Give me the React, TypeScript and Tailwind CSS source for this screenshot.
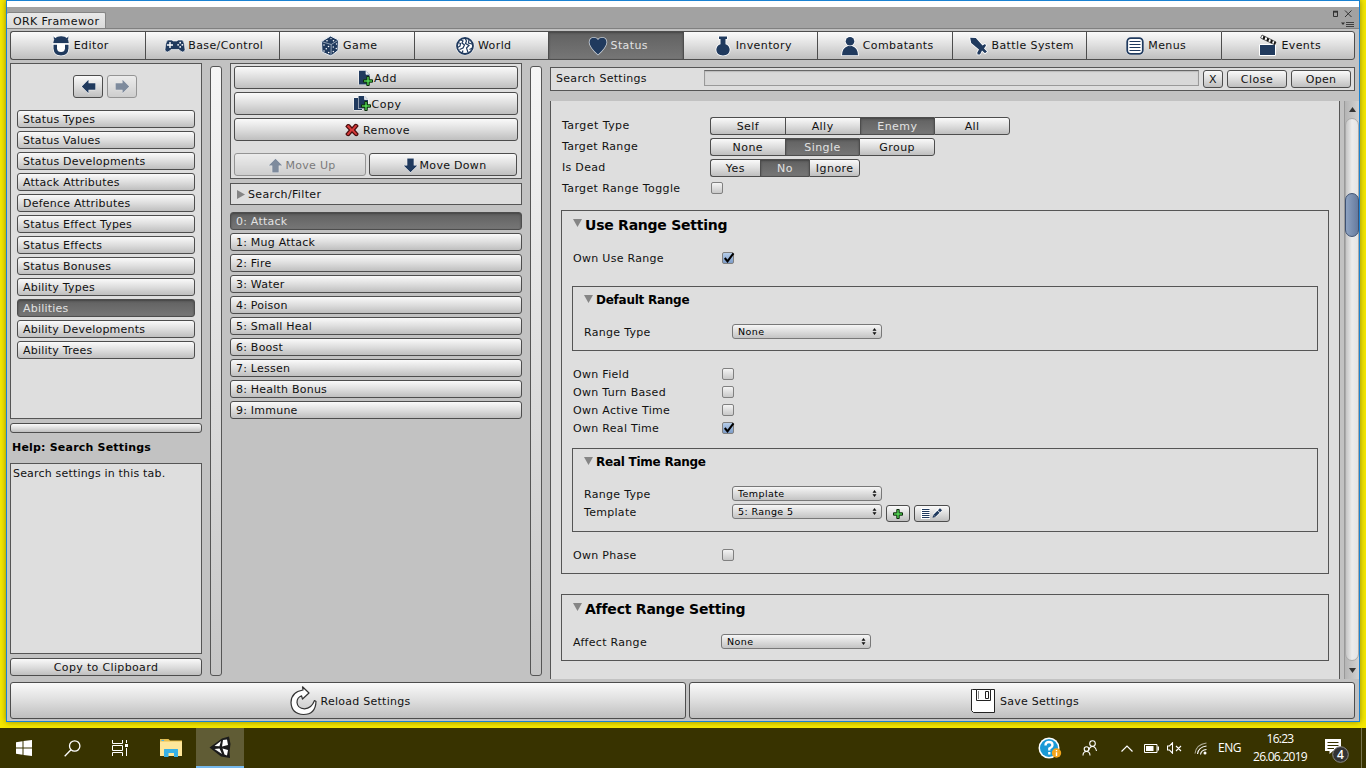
import type { ReactNode } from 'react';
import clsx from 'clsx';

const NAVY = '#203a5e';

const STATUS_SECTIONS = [
    'Status Types',
    'Status Values',
    'Status Developments',
    'Attack Attributes',
    'Defence Attributes',
    'Status Effect Types',
    'Status Effects',
    'Status Bonuses',
    'Ability Types',
    'Abilities',
    'Ability Developments',
    'Ability Trees',
];

const ABILITIES = [
    'Attack',
    'Mug Attack',
    'Fire',
    'Water',
    'Poison',
    'Small Heal',
    'Boost',
    'Lessen',
    'Health Bonus',
    'Immune',
];

const RAISED =
    'border border-[#4d4d4d] bg-linear-to-b from-[#fafafa] via-[#dedede] to-[#bfbfbf]';
const PRESSED =
    'border border-[#4d4d4d] bg-linear-to-b from-[#616161] to-[#767676] text-[#e2e2e2] shadow-[inset_0_1px_2px_#444]';

/* ---------- icons ---------- */

function Halo({
    size = 22,
    children,
}: {
    size?: number;
    children: ReactNode;
}) {
    return (
        <svg
            width={size}
            height={size}
            viewBox="0 0 22 22"
            fill={NAVY}
            stroke="#fff"
            strokeWidth="1.6"
            strokeLinejoin="round"
            paintOrder="stroke"
            className="shrink-0"
        >
            {children}
        </svg>
    );
}

function EditorIcon() {
    return (
        <svg width="22" height="22" viewBox="0 0 22 22" className="shrink-0">
            <path
                d="M3.500 9.500H18.500V13.500Q18 20.500 11 20.500T3.500 13.500Z"
                fill={NAVY}
                stroke="#fff"
                strokeWidth="1.400"
                paintOrder="stroke"
            />
            <path d="M7 9H15V13.500Q14.600 17 11 17T7 13.500Z" fill="#fff" />
            <path d="M3.500 1 6 3.500M18.500 1 16 3.500" stroke="#fff" strokeWidth="2.500" />
            <path d="M3.500 1.200 4 4.500 6 4ZM18.500 1.200 18 4.500 16 4Z" fill={NAVY} />
            <path d="M3.200 8.300Q3.500 1.500 11 1.300T18.800 8.300Z" fill={NAVY} />
            <path d="M2.500 8.900H19.500" stroke="#fff" strokeWidth="1.200" />
        </svg>
    );
}

function GamepadIcon() {
    return (
        <svg width="22" height="22" viewBox="0 0 22 22" className="shrink-0">
            <path
                d="M3.500 5H8L9 6H13L14 5H18.500Q20.500 7 21 14.500 21 17 18.500 17 16.500 16.500 15 14.500H7Q5.500 16.500 3.500 17 1 17 1 14.500 1.500 7 3.500 5Z"
                fill={NAVY}
                stroke="#fff"
                strokeWidth=".6"
            />
            <path d="M5.300 7H6.700V9.300H9V10.700H6.700V13H5.300V10.700H3V9.300H5.300Z" fill="#fff" />
            <g fill="#fff">
                <circle cx="16.200" cy="7.700" r=".9" />
                <circle cx="18.300" cy="9.800" r=".9" />
                <circle cx="14.100" cy="9.800" r=".9" />
                <circle cx="16.200" cy="11.900" r=".9" />
            </g>
        </svg>
    );
}

function DiceIcon() {
    return (
        <svg width="22" height="22" viewBox="0 0 22 22" className="shrink-0">
            <path
                d="M11.500 1 19.500 5 19 15.500 12 21 3 17 2.500 6.500Z"
                fill={NAVY}
                stroke="#e8edf3"
                strokeWidth="1"
            />
            <path
                d="M2.500 6.500 12.200 9.500 19.500 5M12.200 9.500 12 21"
                fill="none"
                stroke="#c3cfdb"
                strokeWidth=".7"
            />
            <g fill="#fff">
                <circle cx="8" cy="5.700" r=".8" />
                <circle cx="12" cy="3.600" r=".7" />
                <circle cx="14.500" cy="5.700" r=".8" />
                <circle cx="5" cy="10" r=".8" />
                <circle cx="9.500" cy="11.500" r=".8" />
                <circle cx="7.300" cy="13.800" r=".8" />
                <circle cx="5" cy="16" r=".8" />
                <circle cx="9.700" cy="17.500" r=".8" />
                <circle cx="14.300" cy="12" r=".7" />
                <circle cx="17.500" cy="9" r=".7" />
                <circle cx="14.300" cy="16.500" r=".7" />
                <circle cx="17.300" cy="13.500" r=".7" />
            </g>
        </svg>
    );
}

function GlobeIcon() {
    return (
        <svg width="22" height="22" viewBox="0 0 22 22" fill="none" className="shrink-0">
            <circle cx="11" cy="11" r="9.300" fill="#fff" />
            <circle cx="11" cy="11" r="8" stroke={NAVY} strokeWidth="1.800" />
            <path
                d="M4 7.500 6.500 8.500 6 11 3.500 12.500M6 4.500 9 6 8 8 10.500 10 9 13 5.500 14.500M11 3 12.500 6 11.500 8.500 15 10.500 12.500 13 14 17.500M15 4.500 14.500 8 18 9M18.500 13 15.500 14.500M8 18 9 15.500"
                stroke={NAVY}
                strokeWidth="1.200"
            />
        </svg>
    );
}

function HeartIcon() {
    return (
        <Halo>
            <path d="M11 19.500Q3 12.500 2.500 7.500 2.600 3 6.800 2.800 9.800 2.900 11 5 12.200 2.900 15.200 2.800 19.400 3 19.500 7.500 19 12.500 11 19.500Z" stroke="#ccd2d9" />
        </Halo>
    );
}

function FlaskIcon() {
    return (
        <Halo>
            <path d="M7 1.500H15V4H13.500V9.200Q17.500 10.500 17.700 14.800 17.500 20.300 11 20.500 4.500 20.300 4.300 14.800 4.500 10.500 8.500 9.200V4H7Z" />
        </Halo>
    );
}

function PersonIcon() {
    return (
        <Halo>
            <path d="M3 20.300Q3.300 12.800 8.500 11.300L11 10.500 13.500 11.300Q18.700 12.800 19 20.300Z" />
            <circle cx="11" cy="6.200" r="4.300" />
        </Halo>
    );
}

function SwordIcon() {
    return (
        <Halo>
            <path d="M2.200 2.800 7.800 3 14.500 10.500 17 9 18 10.500 16 13.500 19 16.500 17 18.300 14 15.500 12 19.500 9.500 19.500 9.300 17.500 11 14.500 3.200 8Z" />
        </Halo>
    );
}

function MenusIcon() {
    return (
        <svg width="22" height="22" viewBox="0 0 22 22" fill="none" className="shrink-0">
            <rect x="2" y="2" width="18" height="18" rx="4.500" fill="#fff" />
            <rect x="3.200" y="3.200" width="15.600" height="15.600" rx="3.500" stroke={NAVY} strokeWidth="1.800" />
            <path d="M5.500 6.500H16.500M5.500 9.500H16.500M5.500 12.500H16.500M5.500 15.500H16.500" stroke={NAVY} />
        </svg>
    );
}

function ClapperIcon() {
    return (
        <svg width="22" height="22" viewBox="0 0 22 22" className="shrink-0 overflow-visible">
            <path d="M2.500 9.500H18.500V20.500H2.500Z" fill={NAVY} stroke="#fff" />
            <path d="M5 0 19 7 17.800 9.800 3.600 3Z" fill="#fff" stroke="#222" strokeWidth=".7" />
            <path d="M6.500.8 8.500 1.800 7.500 4.800 5.500 3.900ZM10.300 2.700 12.300 3.700 11.300 6.700 9.300 5.800ZM14 4.600 16 5.600 15 8.500 13 7.600ZM17.500 6.200 19 7 17.800 9.800 16.500 9.200Z" fill="#111" />
        </svg>
    );
}

function ArrowIcon({ className }: { className?: string }) {
    return (
        <svg width="15" height="15" viewBox="0 0 15 15" className={clsx('shrink-0', className)}>
            <path
                d="M.8 7.500 7.500.7V4.300H14.400V10.700H7.500V14.300Z"
                fill={NAVY}
                stroke="#fff"
                strokeWidth="1"
                paintOrder="stroke"
            />
        </svg>
    );
}

function PlusMark() {
    return (
        <path
            d="M8.800 6.500H11.200V9.800H14.500V12.200H11.200V15.500H8.800V12.200H5.500V9.800H8.800Z"
            fill="#4fd04f"
            stroke="#0b2a0b"
            strokeWidth="1"
        />
    );
}

function AddIcon() {
    return (
        <svg width="16" height="17" viewBox="0 0 16 17" className="shrink-0">
            <path d="M1 .8H8L11.500 4.300V14.500H1Z" fill={NAVY} stroke="#fff" paintOrder="stroke" />
            <path d="M8 .8V4.300H11.500" fill="#dfe5ec" stroke="#fff" strokeWidth=".7" />
            <PlusMark />
        </svg>
    );
}

function CopyIcon() {
    return (
        <svg width="19" height="18" viewBox="-3 0 19 18" className="shrink-0">
            <path d="M-2 3H6V15H-2Z" fill={NAVY} stroke="#fff" paintOrder="stroke" />
            <path d="M2.500 1H8.500L12 4.500V13.500H2.500Z" fill={NAVY} stroke="#fff" paintOrder="stroke" />
            <path d="M8.500 1V4.500H12" fill="#dfe5ec" stroke="#fff" strokeWidth=".7" />
            <PlusMark />
        </svg>
    );
}

function RemoveIcon() {
    return (
        <svg width="14" height="14" viewBox="0 0 14 14" className="shrink-0">
            <path
                d="M1 3.500Q3 .5 4.500 2L7 5 10 1.500Q12 1 13 3L9.500 7 13 11Q12.500 13 10.500 12.500L7 9 4 12.500Q2 13 1 11L4.500 7Z"
                fill="#d93a3a"
                stroke="#4b0d0d"
                strokeWidth="1.200"
            />
        </svg>
    );
}

function ReloadIcon() {
    return (
        <svg width="27" height="30" viewBox="0 0 27 30" className="shrink-0">
            <path
                d="M12.500.8 19 7 12.500 13 11.500 9.800Q7 11.500 7 16.500 7.500 22.500 14.500 22.800 21.500 22.500 24.500 14.500L26 15.500Q25.500 28.500 13.500 28.500 1.500 28 1 16.500 1.200 6 13 4Z"
                fill="#fff"
                stroke="#333"
                strokeWidth="1.200"
                strokeLinejoin="round"
            />
        </svg>
    );
}

function DiskIcon() {
    return (
        <svg width="24" height="24" viewBox="0 0 24 24" fill="#fff" stroke="#222" className="shrink-0">
            <path d="M1.500.5H23.500V23.500H2.500L.5 21.500V.5Z" />
            <path d="M5.500.5H19.500V11.500H5.500Z" />
            <path d="M14.500 2.500H17.500V9.500H14.500Z" />
            <path d="M7.500 2V10" stroke="#888" />
        </svg>
    );
}

const TABS: { label: string; icon: ReactNode }[] = [
    { label: 'Editor', icon: <EditorIcon /> },
    { label: 'Base/Control', icon: <GamepadIcon /> },
    { label: 'Game', icon: <DiceIcon /> },
    { label: 'World', icon: <GlobeIcon /> },
    { label: 'Status', icon: <HeartIcon /> },
    { label: 'Inventory', icon: <FlaskIcon /> },
    { label: 'Combatants', icon: <PersonIcon /> },
    { label: 'Battle System', icon: <SwordIcon /> },
    { label: 'Menus', icon: <MenusIcon /> },
    { label: 'Events', icon: <ClapperIcon /> },
];

/* ---------- controls ---------- */

function Button({
    className,
    disabled,
    children,
}: {
    className?: string;
    disabled?: boolean;
    children?: ReactNode;
}) {
    return (
        <button
            className={clsx(
                'flex shrink-0 items-center justify-center rounded-[3px]',
                RAISED,
                disabled && 'opacity-50',
                className,
            )}
        >
            {children}
        </button>
    );
}

function ListButton({ label, active }: { label: string; active?: boolean }) {
    return (
        <button
            className={clsx(
                'flex h-[18px] w-full shrink-0 items-center rounded-[3px] pl-[5px] tracking-[0.22px]',
                active ? PRESSED : RAISED,
            )}
        >
            {label}
        </button>
    );
}

function Segmented({
    options,
    value,
    className,
}: {
    options: string[];
    value: string;
    className: string;
}) {
    return (
        <div className={clsx('flex h-[18px] tracking-[0.45px]', className)}>
            {options.map((option) => (
                <button
                    key={option}
                    className={clsx(
                        'flex flex-1 items-center justify-center border-r-0 first:rounded-l-[3px] last:rounded-r-[3px] last:border-r',
                        option === value ? PRESSED : RAISED,
                    )}
                >
                    {option}
                </button>
            ))}
        </div>
    );
}

function Checkbox({ checked }: { checked?: boolean }) {
    return (
        <span
            className={clsx(
                'mt-0.5 block size-3 rounded-[2px] border border-[#808080] bg-linear-to-b',
                checked ? 'from-[#b5cdea] to-[#7d9cc8]' : 'from-[#f4f4f4] to-[#c8c8c8]',
            )}
        >
            {checked && (
                <svg width="12" height="12" viewBox="0 0 12 12" className="-mt-px block overflow-visible">
                    <path d="M1.800 6 4.500 9.300 10.500 1.300" fill="none" stroke="#000" strokeWidth="2.100" />
                </svg>
            )}
        </span>
    );
}

function Select({ value }: { value: string }) {
    return (
        <div className="flex h-[15px] w-[150px] items-center justify-between rounded-[3px] border border-[#787878] bg-linear-to-b from-[#f6f6f6] to-[#c4c4c4] pr-1 pl-[5px] text-[9.500px] tracking-[0.4px] text-black">
            {value}
            <svg width="5" height="7" viewBox="0 0 5 7">
                <path d="M2.500 0 4.500 2.700H.5ZM2.500 7 .5 4.300H4.500Z" fill="#111" />
            </svg>
        </div>
    );
}

function Row({
    label,
    className,
    labelClass,
    children,
}: {
    label: string;
    className?: string;
    labelClass: string;
    children: ReactNode;
}) {
    return (
        <div className={clsx('flex shrink-0 items-start', className)}>
            <span className={clsx('h-4 shrink-0 leading-[18px]', labelClass)}>{label}</span>
            {children}
        </div>
    );
}

function Foldout({ className, children }: { className?: string; children: ReactNode }) {
    return (
        <div className={clsx('flex items-start font-bold text-black', className)}>
            <svg width="9" height="8" viewBox="0 0 9 8" className="mt-[3px] mr-[3px] shrink-0">
                <path d="M0 0H9L4.500 8Z" fill="#858585" />
            </svg>
            {children}
        </div>
    );
}

/* ---------- panels ---------- */

function WindowHeader() {
    return (
        <div className="flex h-[22px] shrink-0 items-end justify-between border-b border-[#808080] bg-[#a2a2a2]">
            <div className="flex h-4 w-[99px] items-center rounded-t-[2px] border-t border-r border-[#858585] bg-linear-to-b from-[#e9e9e9] to-[#dadada] pt-px pl-1.5">
                <span className="text-[11px] tracking-[0.4px]">ORK Framewor</span>
            </div>
            <svg width="24" height="20" viewBox="0 0 24 20" fill="none" stroke="#333" className="mr-1 block">
                <path d="M2 4H7M2.500 4V8.500H6.500V4" />
                <path d="M2 3.500H7" strokeWidth="1.500" />
                <path d="M14 2.500 20.500 9M20.500 2.500 14 9" />
                <path d="M15 14.500H23M15 16.500H23M15 18.500H23" strokeWidth=".9" />
                <path d="M10 14.500H14L12 17Z" fill="#333" stroke="none" />
            </svg>
        </div>
    );
}

function SectionColumn() {
    return (
        <div className="mt-[3px] flex w-48 shrink-0 flex-col">
            <div className="h-[356px] border border-[#555] bg-[#dedede] px-1.5 pt-[11px]">
                <div className="flex justify-center gap-1 pr-0.5">
                    <Button className="h-[23px] w-[30px]">
                        <ArrowIcon />
                    </Button>
                    <Button className="h-[23px] w-[30px]" disabled>
                        <ArrowIcon className="rotate-180" />
                    </Button>
                </div>
                <div className="mt-3 flex flex-col gap-[3px]">
                    {STATUS_SECTIONS.map((section) => (
                        <ListButton key={section} label={section} active={section === 'Abilities'} />
                    ))}
                </div>
            </div>
            <Button className="mt-1 h-2.5" />
            <p className="mt-[7px] ml-0.5 text-[11px] leading-4 font-bold tracking-[0.2px] text-black">
                Help: Search Settings
            </p>
            <div className="mt-[7px] h-[191px] border border-[#555] bg-[#dedede] pt-0.5 pl-0.5 leading-4 tracking-[0.18px]">
                Search settings in this tab.
            </div>
            <Button className="mt-1 h-[18px] tracking-[0.35px]">Copy to Clipboard</Button>
        </div>
    );
}

function Splitter() {
    return (
        <div className="mx-2 mt-1.5 h-[610px] w-3 shrink-0 rounded-[3px] border border-[#555] bg-linear-to-b from-[#f6f6f6] to-[#c6c6c6]" />
    );
}

function AbilityColumn() {
    return (
        <div className="mt-[3px] flex w-[292px] shrink-0 flex-col">
            <div className="flex h-[116px] flex-col gap-[3px] border border-[#555] bg-[#dedede] px-[3px] pt-0.5">
                <Button className="h-[23px] pt-px pl-[3px] tracking-[0.5px]">
                    <AddIcon />
                    Add
                </Button>
                <Button className="h-[23px] pt-px pl-0.5 tracking-[0.5px]">
                    <CopyIcon />
                    Copy
                </Button>
                <Button className="h-[23px] gap-1 pt-px pl-[3px] tracking-[0.4px]">
                    <RemoveIcon />
                    Remove
                </Button>
                <div className="mt-[9px] flex gap-[3px]">
                    <Button className="h-[23px] w-[132px] gap-0.5 pt-px pl-1" disabled>
                        <ArrowIcon className="rotate-90" />
                        Move Up
                    </Button>
                    <Button className="h-[23px] w-[148px] gap-0.5 pt-px pl-[3px]">
                        <ArrowIcon className="-rotate-90" />
                        Move Down
                    </Button>
                </div>
            </div>
            <div className="mt-1 flex h-[22px] items-center gap-[3px] border border-[#555] bg-[#dedede] pl-1.5 tracking-[0.35px]">
                <svg width="8" height="9" viewBox="0 0 8 9">
                    <path d="M0 0 8 4.500 0 9Z" fill="#858585" />
                </svg>
                Search/Filter
            </div>
            <div className="mt-[7px] flex flex-col gap-[3px]">
                {ABILITIES.map((ability, index) => (
                    <ListButton key={ability} label={`${index}: ${ability}`} active={index === 0} />
                ))}
            </div>
        </div>
    );
}

function SearchBar() {
    return (
        <div className="mt-[7px] flex h-6 w-[805px] items-start border border-[#555] bg-[#dedede] pt-0.5 pl-[5px]">
            <span className="h-4 w-[148px] leading-[18px]">Search Settings</span>
            <div className="h-4 w-[495px] border border-[#999] border-t-[#666] bg-[#d8d8d8] shadow-[inset_0_1px_1px_#bbb]" />
            <Button className="ml-1 h-[18px] w-5">X</Button>
            <Button className="ml-1 h-[18px] w-[60px] tracking-[0.5px]">Close</Button>
            <Button className="ml-1 h-[18px] w-[60px]">Open</Button>
        </div>
    );
}

function UseRangeBox() {
    return (
        <div className="mt-[9px] h-[364px] border border-[#555] px-2.5">
            <Foldout className="ml-px h-6 pt-[5px] text-[14px] leading-[18px] tracking-[-0.24px]">Use Range Setting</Foldout>
            <Row label="Own Use Range" className="mt-[15px] h-[18px]" labelClass="ml-px w-[149px]">
                <Checkbox checked />
            </Row>

            <div className="mt-[18px] h-[65px] border border-[#555] pl-[11px]">
                <Foldout className="h-[21px] pt-[5px] text-[12px] leading-[17px] tracking-[-0.25px]">Default Range</Foldout>
                <Row label="Range Type" className="mt-4" labelClass="w-[148px]">
                    <Select value="None" />
                </Row>
            </div>

            <div className="mt-[15px]">
                <Row label="Own Field" className="h-[18px]" labelClass="ml-px w-[149px]">
                    <Checkbox />
                </Row>
                <Row label="Own Turn Based" className="h-[18px]" labelClass="ml-px w-[149px]">
                    <Checkbox />
                </Row>
                <Row label="Own Active Time" className="h-[18px]" labelClass="ml-px w-[149px]">
                    <Checkbox />
                </Row>
                <Row label="Own Real Time" className="h-[18px]" labelClass="ml-px w-[149px]">
                    <Checkbox checked />
                </Row>
            </div>

            <div className="mt-[10px] h-[84px] border border-[#555] pl-[11px]">
                <Foldout className="h-[21px] pt-[5px] text-[12px] leading-[17px] tracking-[-0.25px]">Real Time Range</Foldout>
                <Row label="Range Type" className="mt-4 h-[18px]" labelClass="w-[148px]">
                    <Select value="Template" />
                </Row>
                <Row label="Template" className="h-[18px]" labelClass="w-[148px]">
                    <Select value="5: Range 5" />
                    <Button className="mt-px ml-1 h-[17px] w-6">
                        <svg width="12" height="12" viewBox="4 5 12 12">
                            <PlusMark />
                        </svg>
                    </Button>
                    <Button className="mt-px ml-1 h-[17px] w-9">
                        <svg width="22" height="11" viewBox="0 0 22 11" fill="none" className="shrink-0">
                            <path d="M0 0H9V11H0Z" fill="#fff" />
                            <path d="M1 1.500H8.500M1 3.500H8.500M1 5.500H8.500M1 7.500H8.500M1 9.500H8.500" stroke={NAVY} />
                            <path d="M13.500 7.500 19.500 1.500" stroke="#fff" strokeWidth="4.500" />
                            <path d="M13.500 7.700 17.500 3.700M18 3.200 20 1.200" stroke={NAVY} strokeWidth="3" />
                            <path d="M11.500 9.800 12.300 7 14.500 9Z" fill={NAVY} />
                        </svg>
                    </Button>
                </Row>
            </div>

            <Row label="Own Phase" className="mt-[15px]" labelClass="ml-px w-[149px]">
                <Checkbox />
            </Row>
        </div>
    );
}

function Scrollbar() {
    return (
        <div className="ml-1 flex w-[15px] flex-col border-l border-[#999] bg-linear-to-r from-[#b5b5b5] to-[#d2d2d2]">
            <div className="flex h-[17px] items-center justify-center">
                <svg width="7" height="5" viewBox="0 0 7 5">
                    <path d="M3.500 0 7 5H0Z" fill="#333" />
                </svg>
            </div>
            <div className="flex-1 rounded-full border border-[#aaa] bg-linear-to-r from-[#c6c6c6] via-[#ececec] to-[#e4e4e4] pt-[74px]">
                <div className="-mx-px h-[44px] rounded-full border border-[#3f5272] bg-linear-to-r from-[#8ea3c2] to-[#667b9e]" />
            </div>
            <div className="flex h-[18px] items-center justify-center">
                <svg width="7" height="5" viewBox="0 0 7 5">
                    <path d="M0 0H7L3.500 5Z" fill="#333" />
                </svg>
            </div>
        </div>
    );
}

function SettingsColumn() {
    return (
        <div className="flex flex-1 flex-col">
            <SearchBar />
            <div className="mt-2.5 flex h-[578px]">
                <div className="w-[790px] border-x border-[#555] bg-[#dedede] px-2.5 pt-4">
                    <Row label="Target Type" className="h-[21px]" labelClass="ml-px w-[148px] tracking-[0.45px]">
                        <Segmented className="w-[300px]" options={['Self', 'Ally', 'Enemy', 'All']} value="Enemy" />
                    </Row>
                    <Row label="Target Range" className="h-[21px]" labelClass="ml-px w-[148px]">
                        <Segmented className="w-[225px]" options={['None', 'Single', 'Group']} value="Single" />
                    </Row>
                    <Row label="Is Dead" className="h-[21px]" labelClass="ml-px w-[148px]">
                        <Segmented className="w-[150px]" options={['Yes', 'No', 'Ignore']} value="No" />
                    </Row>
                    <Row label="Target Range Toggle" className="h-[21px]" labelClass="ml-px w-[149px] tracking-[0.38px]">
                        <Checkbox />
                    </Row>
                    <UseRangeBox />
                    <div className="mt-5 h-[67px] border border-[#555] px-2.5">
                        <Foldout className="ml-px pt-[5px] text-[14px] leading-[18px] tracking-[-0.22px]">Affect Range Setting</Foldout>
                        <Row label="Affect Range" className="mt-4" labelClass="ml-px w-[148px]">
                            <Select value="None" />
                        </Row>
                    </div>
                </div>
                <Scrollbar />
            </div>
        </div>
    );
}

function Taskbar() {
    return (
        <footer className="flex h-10 items-center bg-[#383300] font-['Open_Sans','Noto_Sans',sans-serif] text-[12px] tracking-normal text-white">
            <div className="flex w-12 justify-center">
                <svg width="16" height="16" viewBox="0 0 16 16" fill="#fff">
                    <path d="M0 2.200 6.500 1.300V7.500H0ZM7.500 1.100 16 0V7.500H7.500ZM0 8.500H6.500V14.700L0 13.800ZM7.500 8.500H16V16L7.500 14.900Z" />
                </svg>
            </div>
            <div className="flex w-12 justify-center">
                <svg width="17" height="17" viewBox="0 0 17 17" fill="none" stroke="#fff" strokeWidth="1.300">
                    <circle cx="10.700" cy="6" r="5.200" />
                    <path d="M7 9.800.7 16.300" />
                </svg>
            </div>
            <div className="flex w-12 justify-center">
                <svg width="17" height="16" viewBox="0 0 17 16" fill="none" stroke="#fff">
                    <path d="M.5 0V3.500H10.500V0M.5 16V12.500H10.500V16M.5 5.500H10.500V10.500H.5ZM14.500 0V3M14.500 8V16" />
                    <path d="M13 4H16V7H13Z" fill="#fff" stroke="none" />
                </svg>
            </div>
            <div className="flex w-[52px] justify-center pl-px">
                <svg width="22" height="18" viewBox="0 0 22 18">
                    <path d="M0 0H8.500L10 1.500H22V16.500H0Z" fill="#e9bf4d" />
                    <path d="M0 2.500H22V17H0Z" fill="#ffe79a" />
                    <path d="M1.500.8H4V2H1.500Z" fill="#4fb4e4" />
                    <path d="M4 18V10.500Q4 10 4.500 10H17.500Q18 10 18 10.500V18H14V14H8.500V18Z" fill="#38b1e6" />
                </svg>
            </div>
            <div className="flex h-10 w-12 items-center justify-center border-b-2 border-[#76b9ed] bg-[#605c35]">
                <svg width="22" height="23" viewBox="0 0 22 23">
                    <path d="M.5 11.500 13 2.500 20 .5 21.500 8 20.500 16 21 22 12 20.500Z" fill="#1b1b1b" />
                    <path d="M5.500 10 12 5 10.500 10.300ZM14 4 18 3.500 19 9 13 10.500ZM5.500 13 10.500 12.500 13 18ZM13.500 12.500 19 14 18 19.500 15.500 18.500Z" fill="#fff" />
                </svg>
            </div>

            <div className="ml-auto flex items-center">
                <svg width="24" height="23" viewBox="0 0 24 23">
                    <circle cx="11" cy="11" r="10.500" fill="#fff" />
                    <circle cx="11" cy="11" r="9" fill="#1a9ad6" />
                    <path d="M7.500 8.500Q7.500 5 11 5T14.500 8Q14.500 10 11.300 11.500V13.500M11.300 15V17.500" fill="none" stroke="#fff" strokeWidth="2.300" />
                    <circle cx="18.500" cy="16" r="4.700" fill="#f4a51c" />
                    <path d="M18.500 13V14.300M18.500 15.300V19" stroke="#fff" strokeWidth="1.400" />
                </svg>
                <svg width="16" height="16" viewBox="0 0 16 16" fill="none" stroke="#fff" strokeWidth="1.100" className="ml-5">
                    <circle cx="10.500" cy="3.500" r="2.800" />
                    <path d="M6.800 10.500Q7.500 6.500 10.500 6.500T14.500 11" />
                    <circle cx="4.500" cy="9" r="2.300" />
                    <path d="M1 15.500Q1 11.500 4.500 11.500T8 15.500" />
                </svg>
                <svg width="12" height="7" viewBox="0 0 12 7" fill="none" stroke="#fff" strokeWidth="1.200" className="ml-[23px]">
                    <path d="M.5 6.500 6 1 11.500 6.500" />
                </svg>
                <svg width="15" height="9" viewBox="0 0 15 9" className="ml-[11px]">
                    <path d="M.5.500H13V8.500H.5Z" fill="none" stroke="#fff" />
                    <path d="M2 2H9.500V7H2ZM13.500 2.500H15V6.500H13.500Z" fill="#fff" />
                </svg>
                <svg width="15" height="12" viewBox="0 0 15 12" fill="none" stroke="#fff" strokeWidth="1.100" className="ml-2">
                    <path d="M.5 4H2.500L5.500.8V11.200L2.500 8H.5ZM9 4 14 9M14 4 9 9" />
                </svg>
                <svg width="13" height="13" viewBox="0 0 13 13" fill="none" stroke="#fff" strokeWidth="1.100" className="ml-3">
                    <path d="M1 11.500Q2 2.500 12.500 1" opacity=".6" />
                    <path d="M3.500 12Q4.500 5 12.500 4" />
                    <path d="M6.500 12.500Q7 8 12.500 7.500" />
                    <circle cx="11" cy="11" r="1.500" fill="#fff" stroke="none" />
                </svg>
                <span className="ml-[11px] w-[23px] tracking-[-0.5px]">ENG</span>
                <div className="ml-3 w-[54px] text-center leading-[18px] tracking-[-0.72px] whitespace-nowrap">
                    <p>16:23</p>
                    <p>26.06.2019</p>
                </div>
                <svg width="24" height="25" viewBox="0 0 24 25" className="mt-1.5 ml-[18px]">
                    <path d="M0 0H16V12H8L4.500 15V12H0Z" fill="#fff" />
                    <path d="M2.500 3.500H13.500M2.500 6.500H13.500M2.500 9.500H9" stroke="#383300" />
                    <circle cx="15.500" cy="15.500" r="7.800" fill="#333" stroke="#888" />
                    <text x="15.500" y="20" textAnchor="middle" fontSize="12" fontWeight="600" fill="#fff">
                        4
                    </text>
                </svg>
                <div className="ml-3 h-10 w-[5px] border-l border-[#77744f]" />
            </div>
        </footer>
    );
}

export default function App() {
    return (
        <div className="flex h-[768px] w-[1366px] flex-col overflow-hidden bg-[#f5e800] font-['DejaVu_Sans',sans-serif] text-[11px] leading-none tracking-[0.3px] text-[#111]">
            <div className="mb-1.5 ml-1.5 flex h-[722px] w-[1354px] shrink-0 flex-col border border-[#1a82d2] bg-[#c2c2c2] shadow-[0_0_6px_#8f8700]">
                <div className="h-1.5 shrink-0 bg-white" />
                <WindowHeader />
                <nav className="mt-0.5 ml-[3px] grid h-[29px] w-[1345px] shrink-0 grid-cols-10">
                    {TABS.map((tab) => (
                        <button
                            key={tab.label}
                            className={clsx(
                                'flex items-center justify-center gap-0.5 border-r-0 pl-[3px] tracking-[0.4px] first:rounded-l-[3px] last:rounded-r-[3px] last:border-r',
                                tab.label === 'Status' ? PRESSED : RAISED,
                            )}
                        >
                            {tab.icon}
                            <span>{tab.label}</span>
                        </button>
                    ))}
                </nav>
                <main className="ml-[3px] flex h-[622px] shrink-0">
                    <SectionColumn />
                    <Splitter />
                    <AbilityColumn />
                    <Splitter />
                    <SettingsColumn />
                </main>
                <div className="ml-[3px] flex gap-[3px] tracking-[0.25px]">
                    <Button className="h-[37px] w-[676px] gap-1 pl-1">
                        <ReloadIcon />
                        <span className="pt-0.5">Reload Settings</span>
                    </Button>
                    <Button className="h-[37px] w-[666px] gap-[5px] pl-1.5">
                        <DiskIcon />
                        <span className="pt-0.5">Save Settings</span>
                    </Button>
                </div>
            </div>
            <Taskbar />
        </div>
    );
}
